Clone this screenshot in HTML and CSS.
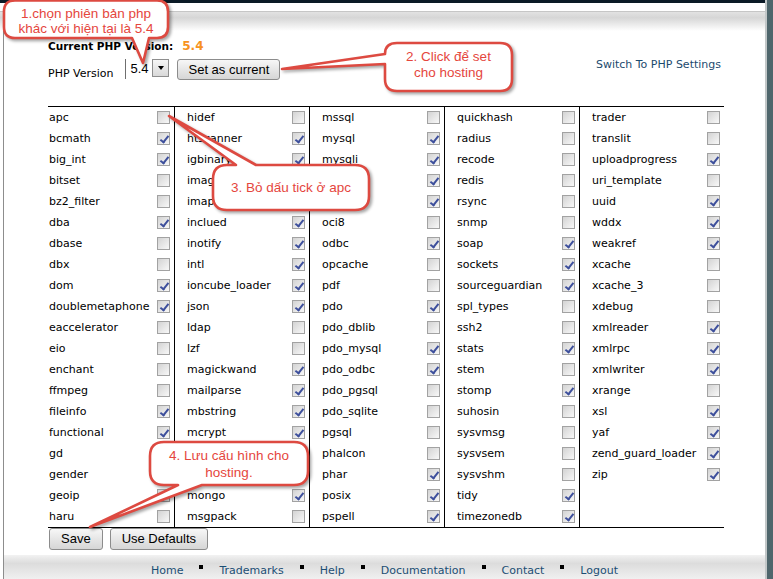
FILE: index.html
```html
<!DOCTYPE html>
<html>
<head>
<meta charset="utf-8">
<title>PHP Selector</title>
<link rel="stylesheet" href="styles.css">
</head>
<body>
<div class="page">
  <div class="main">
    <div class="topbar"></div>
    <div class="topgap"></div>
    <div class="hdr"></div>
    <div class="frame">
      <div class="content">
        <div class="current"><span class="current-label">Current PHP Version:</span><span class="current-num">5.4</span></div>
        <div class="version-row">
          <span class="ver-label">PHP Version</span>
          <div class="select"><span class="select-val">5.4</span><span class="select-btn"><span class="tri"></span></span></div>
          <button class="btn btn-set">Set as current</button>
          <a class="switch-link">Switch To PHP Settings</a>
        </div>
        <div class="ext-table">
          <div class="col c1">
            <div class="row"><span>apc</span><span class="cb"></span></div>
            <div class="row"><span>bcmath</span><span class="cb on"></span></div>
            <div class="row"><span>big_int</span><span class="cb on"></span></div>
            <div class="row"><span>bitset</span><span class="cb"></span></div>
            <div class="row"><span>bz2_filter</span><span class="cb"></span></div>
            <div class="row"><span>dba</span><span class="cb on"></span></div>
            <div class="row"><span>dbase</span><span class="cb"></span></div>
            <div class="row"><span>dbx</span><span class="cb"></span></div>
            <div class="row"><span>dom</span><span class="cb on"></span></div>
            <div class="row"><span>doublemetaphone</span><span class="cb on"></span></div>
            <div class="row"><span>eaccelerator</span><span class="cb"></span></div>
            <div class="row"><span>eio</span><span class="cb"></span></div>
            <div class="row"><span>enchant</span><span class="cb"></span></div>
            <div class="row"><span>ffmpeg</span><span class="cb"></span></div>
            <div class="row"><span>fileinfo</span><span class="cb on"></span></div>
            <div class="row"><span>functional</span><span class="cb on"></span></div>
            <div class="row"><span>gd</span><span class="cb on"></span></div>
            <div class="row"><span>gender</span><span class="cb"></span></div>
            <div class="row"><span>geoip</span><span class="cb on"></span></div>
            <div class="row"><span>haru</span><span class="cb"></span></div>
          </div>
          <div class="col">
            <div class="row"><span>hidef</span><span class="cb"></span></div>
            <div class="row"><span>htscanner</span><span class="cb on"></span></div>
            <div class="row"><span>igbinary</span><span class="cb on"></span></div>
            <div class="row"><span>imag</span><span class="cb on"></span></div>
            <div class="row"><span>imap</span><span class="cb on"></span></div>
            <div class="row"><span>inclued</span><span class="cb on"></span></div>
            <div class="row"><span>inotify</span><span class="cb on"></span></div>
            <div class="row"><span>intl</span><span class="cb on"></span></div>
            <div class="row"><span>ioncube_loader</span><span class="cb on"></span></div>
            <div class="row"><span>json</span><span class="cb on"></span></div>
            <div class="row"><span>ldap</span><span class="cb"></span></div>
            <div class="row"><span>lzf</span><span class="cb"></span></div>
            <div class="row"><span>magickwand</span><span class="cb on"></span></div>
            <div class="row"><span>mailparse</span><span class="cb on"></span></div>
            <div class="row"><span>mbstring</span><span class="cb on"></span></div>
            <div class="row"><span>mcrypt</span><span class="cb on"></span></div>
            <div class="row"><span></span><span class="cb on"></span></div>
            <div class="row"><span></span><span class="cb on"></span></div>
            <div class="row"><span>mongo</span><span class="cb on"></span></div>
            <div class="row"><span>msgpack</span><span class="cb"></span></div>
          </div>
          <div class="col">
            <div class="row"><span>mssql</span><span class="cb"></span></div>
            <div class="row"><span>mysql</span><span class="cb on"></span></div>
            <div class="row"><span>mysqli</span><span class="cb on"></span></div>
            <div class="row"><span></span><span class="cb on"></span></div>
            <div class="row"><span></span><span class="cb on"></span></div>
            <div class="row"><span>oci8</span><span class="cb"></span></div>
            <div class="row"><span>odbc</span><span class="cb on"></span></div>
            <div class="row"><span>opcache</span><span class="cb"></span></div>
            <div class="row"><span>pdf</span><span class="cb"></span></div>
            <div class="row"><span>pdo</span><span class="cb on"></span></div>
            <div class="row"><span>pdo_dblib</span><span class="cb"></span></div>
            <div class="row"><span>pdo_mysql</span><span class="cb on"></span></div>
            <div class="row"><span>pdo_odbc</span><span class="cb on"></span></div>
            <div class="row"><span>pdo_pgsql</span><span class="cb"></span></div>
            <div class="row"><span>pdo_sqlite</span><span class="cb"></span></div>
            <div class="row"><span>pgsql</span><span class="cb"></span></div>
            <div class="row"><span>phalcon</span><span class="cb"></span></div>
            <div class="row"><span>phar</span><span class="cb on"></span></div>
            <div class="row"><span>posix</span><span class="cb on"></span></div>
            <div class="row"><span>pspell</span><span class="cb on"></span></div>
          </div>
          <div class="col">
            <div class="row"><span>quickhash</span><span class="cb"></span></div>
            <div class="row"><span>radius</span><span class="cb"></span></div>
            <div class="row"><span>recode</span><span class="cb"></span></div>
            <div class="row"><span>redis</span><span class="cb"></span></div>
            <div class="row"><span>rsync</span><span class="cb"></span></div>
            <div class="row"><span>snmp</span><span class="cb"></span></div>
            <div class="row"><span>soap</span><span class="cb on"></span></div>
            <div class="row"><span>sockets</span><span class="cb on"></span></div>
            <div class="row"><span>sourceguardian</span><span class="cb on"></span></div>
            <div class="row"><span>spl_types</span><span class="cb"></span></div>
            <div class="row"><span>ssh2</span><span class="cb"></span></div>
            <div class="row"><span>stats</span><span class="cb on"></span></div>
            <div class="row"><span>stem</span><span class="cb"></span></div>
            <div class="row"><span>stomp</span><span class="cb on"></span></div>
            <div class="row"><span>suhosin</span><span class="cb"></span></div>
            <div class="row"><span>sysvmsg</span><span class="cb"></span></div>
            <div class="row"><span>sysvsem</span><span class="cb"></span></div>
            <div class="row"><span>sysvshm</span><span class="cb"></span></div>
            <div class="row"><span>tidy</span><span class="cb on"></span></div>
            <div class="row"><span>timezonedb</span><span class="cb on"></span></div>
          </div>
          <div class="col c5">
            <div class="row"><span>trader</span><span class="cb"></span></div>
            <div class="row"><span>translit</span><span class="cb"></span></div>
            <div class="row"><span>uploadprogress</span><span class="cb on"></span></div>
            <div class="row"><span>uri_template</span><span class="cb"></span></div>
            <div class="row"><span>uuid</span><span class="cb on"></span></div>
            <div class="row"><span>wddx</span><span class="cb on"></span></div>
            <div class="row"><span>weakref</span><span class="cb on"></span></div>
            <div class="row"><span>xcache</span><span class="cb"></span></div>
            <div class="row"><span>xcache_3</span><span class="cb"></span></div>
            <div class="row"><span>xdebug</span><span class="cb"></span></div>
            <div class="row"><span>xmlreader</span><span class="cb on"></span></div>
            <div class="row"><span>xmlrpc</span><span class="cb on"></span></div>
            <div class="row"><span>xmlwriter</span><span class="cb on"></span></div>
            <div class="row"><span>xrange</span><span class="cb"></span></div>
            <div class="row"><span>xsl</span><span class="cb on"></span></div>
            <div class="row"><span>yaf</span><span class="cb on"></span></div>
            <div class="row"><span>zend_guard_loader</span><span class="cb on"></span></div>
            <div class="row"><span>zip</span><span class="cb on"></span></div>
          </div>
        </div>
        <div class="actions">
          <button class="btn btn-act">Save</button>
          <button class="btn btn-act">Use Defaults</button>
        </div>
      </div>
      <div class="footer">
        <a>Home</a><span class="sep"></span><a>Trademarks</a><span class="sep"></span><a>Help</a><span class="sep"></span><a>Documentation</a><span class="sep"></span><a>Contact</a><span class="sep"></span><a>Logout</a>
      </div>
    </div>
  </div>
  <div class="rail"></div>

  <svg class="callouts" width="773" height="579" viewBox="0 0 773 579">
    <path d="M15,0.5 H157 Q168,0.5 168,11.5 V27 Q168,38 157,38 H149 L143,63 L132,38 H15 Q4,38 4,27 V11.5 Q4,0.5 15,0.5 Z"/>
    <path d="M397,43 H500 Q512,43 512,55 V79 Q512,91 500,91 H397 Q385,91 385,79 V64 L282,69 L385,54 Q385,43 397,43 Z"/>
    <path d="M227,165 H236 L169,116 L256,165 H355 Q369,165 369,179 V196 Q369,210 355,210 H227 Q213,210 213,196 V179 Q213,165 227,165 Z"/>
    <path d="M164,442 H294 Q308,442 308,456 V471 Q308,485 294,485 H202 L90,527 L178,485 H164 Q150,485 150,471 V456 Q150,442 164,442 Z"/>
  </svg>
  <div class="ctext ct1">1.chọn phiên bản php<br>khác với hiện tại là 5.4</div>
  <div class="ctext ct2">2. Click để set<br>cho hosting</div>
  <div class="ctext ct3">3. Bỏ dấu tick ở apc</div>
  <div class="ctext ct4">4. Lưu cấu hình cho<br>hosting.</div>
</div>
</body>
</html>
```

FILE: styles.css
```css
* { box-sizing: border-box; }
html, body { margin: 0; padding: 0; }
body {
  width: 773px;
  height: 579px;
  overflow: hidden;
  background: #fff;
  font-family: "DejaVu Sans", Verdana, sans-serif;
  font-size: 11px;
  color: #000;
}
.page { position: relative; display: flex; width: 773px; height: 579px; }
.main { width: 765px; display: flex; flex-direction: column; }
.topbar { height: 3px; background: #0b1a26; }
.topgap { height: 8px; }
.hdr {
  height: 20px;
  border-top: 1px solid #c6c6c6;
  background: linear-gradient(#e2e2e2, #d6d6d6 30%, #fff);
}
.frame {
  flex: 1;
  margin-left: 3px;
  border-left: 1px solid #8d8d8d;
  display: flex;
  flex-direction: column;
}
.content { flex: 1; padding-left: 44px; }

.current {
  margin-top: 8px;
  height: 14px;
  line-height: 14px;
  display: flex;
  align-items: baseline;
  gap: 9px;
}
.current-label { font-weight: bold; font-size: 10.5px; }
.current-num { font-weight: bold; font-size: 12px; color: #f7931e; }

.version-row {
  margin-top: 6px;
  width: 676px;
  height: 21px;
  display: flex;
  align-items: flex-start;
}
.ver-label { margin-top: 8px; line-height: 14px; margin-right: 12px; }
.select {
  width: 44px;
  height: 20px;
  display: flex;
  align-items: flex-start;
  border-left: 1px solid #6f6f6f;
  margin-right: 8px;
}
.select-val {
  font-family: "Liberation Sans", Arial, sans-serif;
  font-size: 13px;
  line-height: 19px;
  padding-left: 4px;
}
.select-btn {
  margin-left: auto;
  width: 17px;
  height: 18px;
  border: 1px solid #8e8e8e;
  background: linear-gradient(#f6f6f6, #d9d9d9);
  display: flex;
  align-items: center;
  justify-content: center;
}
.tri {
  width: 0;
  height: 0;
  border-left: 3.5px solid transparent;
  border-right: 3.5px solid transparent;
  border-top: 4px solid #000;
}
.btn {
  font-family: "Liberation Sans", Arial, sans-serif;
  font-size: 13px;
  color: #000;
  border: 1px solid #8c8c8c;
  border-radius: 3px;
  background: linear-gradient(#f7f7f7, #e6e6e6 50%, #d6d6d6);
  margin: 0;
  line-height: 18px;
}
.btn-set { height: 21px; padding: 0 10px; }
.switch-link {
  margin-left: auto;
  margin-right: 3px;
  margin-top: -1px;
  line-height: 14px;
  color: #1b4a6e;
}

.ext-table {
  margin-top: 26px;
  width: 676px;
  display: flex;
  border-top: 1px solid #000;
  border-bottom: 1px solid #000;
}
.col { width: 135px; border-left: 1px solid #000; padding-left: 12px; }
.col.c1 { width: 126px; border-left: none; padding-left: 1px; }
.col.c5 { width: 145px; }
.row {
  height: 21px;
  display: flex;
  align-items: center;
  justify-content: space-between;
  padding-right: 4px;
  line-height: 14px;
}
.cb {
  position: relative;
  width: 13px;
  height: 13px;
  flex: none;
  border: 1px solid #a2a2a2;
  background: linear-gradient(135deg, #d3d3d3, #f8f8f8);
}
.cb.on::after {
  content: "";
  position: absolute;
  left: 3.5px;
  top: 0.5px;
  width: 3px;
  height: 7px;
  border: solid #3d4f9c;
  border-width: 0 2px 2px 0;
  transform: rotate(38deg);
}

.actions { display: flex; gap: 7px; padding-left: 1px; }
.btn-act { height: 22px; padding: 0 11px; }

.footer {
  height: 24px;
  padding-top: 9px;
  line-height: 14px;
  text-align: center;
  background: linear-gradient(#f2f2f2, #dcdcdc 35%, #f0f0f0);
}
.footer a { color: #1b4e74; }
.sep {
  display: inline-block;
  width: 4px;
  height: 4px;
  background: #000;
  margin: 0 16px;
  vertical-align: 5px;
}

.rail {
  width: 8px;
  border-left: 2px solid #c2c7c8;
  background: #4f666c;
}

.callouts { position: absolute; left: 0; top: 0; pointer-events: none; }
.callouts path {
  fill: #fff;
  stroke: #dd4a41;
  stroke-width: 2.6;
  stroke-linejoin: round;
  filter: drop-shadow(2px 2px 1.5px rgba(0, 0, 0, 0.35));
}
.ctext {
  position: absolute;
  text-align: center;
  font-family: "Liberation Sans", Arial, sans-serif;
  font-size: 13.5px;
  line-height: 15px;
  color: #e5463d;
}
.ct1 { left: 4px; top: 6px; width: 164px; }
.ct2 { left: 385px; top: 49px; width: 127px; line-height: 16px; }
.ct3 { left: 213px; top: 180px; width: 156px; line-height: 16px; }
.ct4 { left: 150px; top: 448px; width: 158px; line-height: 16.5px; }
```
